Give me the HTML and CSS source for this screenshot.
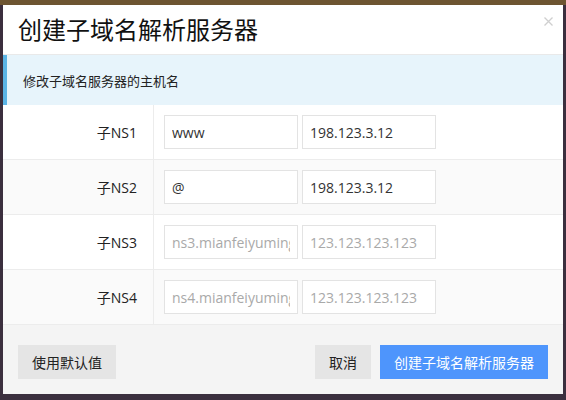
FILE: index.html
```html
<!DOCTYPE html>
<html lang="zh-CN">
<head>
<meta charset="utf-8">
<title>创建子域名解析服务器</title>
<link rel="stylesheet" href="styles.css">
</head>
<body>
<div class="modal">
  <div class="modal-header">
    <h1 class="modal-title">创建子域名解析服务器</h1>
    <span class="close" aria-label="关闭">
      <svg width="9" height="9" viewBox="0 0 9 9"><path d="M0.5 0.5L8.5 8.5M8.5 0.5L0.5 8.5" stroke="#cfcfcf" stroke-width="1.3" fill="none"/></svg>
    </span>
  </div>
  <div class="alert">修改子域名服务器的主机名</div>
  <div class="form">
    <div class="row">
      <div class="label">子NS1</div>
      <div class="fields">
        <input class="input" type="text" value="www">
        <input class="input" type="text" value="198.123.3.12">
      </div>
    </div>
    <div class="row alt">
      <div class="label">子NS2</div>
      <div class="fields">
        <input class="input" type="text" value="@">
        <input class="input" type="text" value="198.123.3.12">
      </div>
    </div>
    <div class="row">
      <div class="label">子NS3</div>
      <div class="fields">
        <input class="input" type="text" placeholder="ns3.mianfeiyuming.com">
        <input class="input" type="text" placeholder="123.123.123.123">
      </div>
    </div>
    <div class="row alt">
      <div class="label">子NS4</div>
      <div class="fields">
        <input class="input" type="text" placeholder="ns4.mianfeiyuming.com">
        <input class="input" type="text" placeholder="123.123.123.123">
      </div>
    </div>
  </div>
  <div class="modal-footer">
    <button class="btn">使用默认值</button>
    <div class="footer-right">
      <button class="btn">取消</button>
      <button class="btn btn-primary">创建子域名解析服务器</button>
    </div>
  </div>
</div>
</body>
</html>
```

FILE: styles.css
```css
* { box-sizing: border-box; }

html, body {
  margin: 0;
  height: 100%;
}

body {
  width: 566px;
  height: 400px;
  overflow: hidden;
  padding: 5px 3px 0 3px;
  background: linear-gradient(to bottom, #6d5531 0, #6d5531 5px, #3b2f3e 5px, #3b2f3e 100%);
  font-family: "Open Sans", "Noto Sans CJK SC", sans-serif;
  color: #222;
}

.modal {
  width: 560px;
  background: #fff;
}

.modal-header {
  height: 50px;
  display: flex;
  justify-content: space-between;
  align-items: center;
  padding: 0 10px 0 15px;
  border-bottom: 1px solid #e9e9e9;
}

.modal-title {
  margin: 0;
  font-size: 24px;
  font-weight: normal;
  line-height: 27px;
  color: #111;
}

.close {
  align-self: flex-start;
  margin-top: 12px;
  width: 9px;
  height: 9px;
  display: flex;
}

.alert {
  height: 50px;
  display: flex;
  align-items: center;
  padding-left: 16px;
  border-left: 4px solid #5bb4e5;
  background: #e7f4fb;
  font-size: 13px;
  color: #222;
}

.row {
  display: flex;
  height: 55px;
  border-bottom: 1px solid #ececec;
  background: #fff;
}

.row.alt {
  background: #fafafa;
}

.label {
  width: 151px;
  border-right: 1px solid #ececec;
  display: flex;
  align-items: center;
  justify-content: flex-end;
  padding-right: 16px;
  font-size: 14px;
  color: #222;
}

.fields {
  display: flex;
  align-items: center;
  gap: 4px;
  padding-left: 10px;
}

.input {
  width: 134px;
  height: 34px;
  border: 1px solid #e3e3e3;
  border-radius: 0;
  background: #fff;
  padding: 0 7px;
  font-family: "Open Sans", "Noto Sans CJK SC", sans-serif;
  font-size: 14px;
  color: #333;
  outline: none;
}

.input::placeholder {
  color: #a9a9a9;
}

.modal-footer {
  height: 69px;
  background: #f4f4f4;
  display: flex;
  justify-content: space-between;
  align-items: flex-start;
  padding: 20px 15px 15px 15px;
}

.footer-right {
  display: flex;
  gap: 9px;
}

.btn {
  height: 34px;
  padding: 0 14px;
  border: none;
  border-radius: 0;
  background: #e5e5e5;
  font-family: "Open Sans", "Noto Sans CJK SC", sans-serif;
  font-size: 14px;
  color: #222;
  cursor: pointer;
}

.btn-primary {
  background: #4e95fc;
  color: #fff;
}
```
